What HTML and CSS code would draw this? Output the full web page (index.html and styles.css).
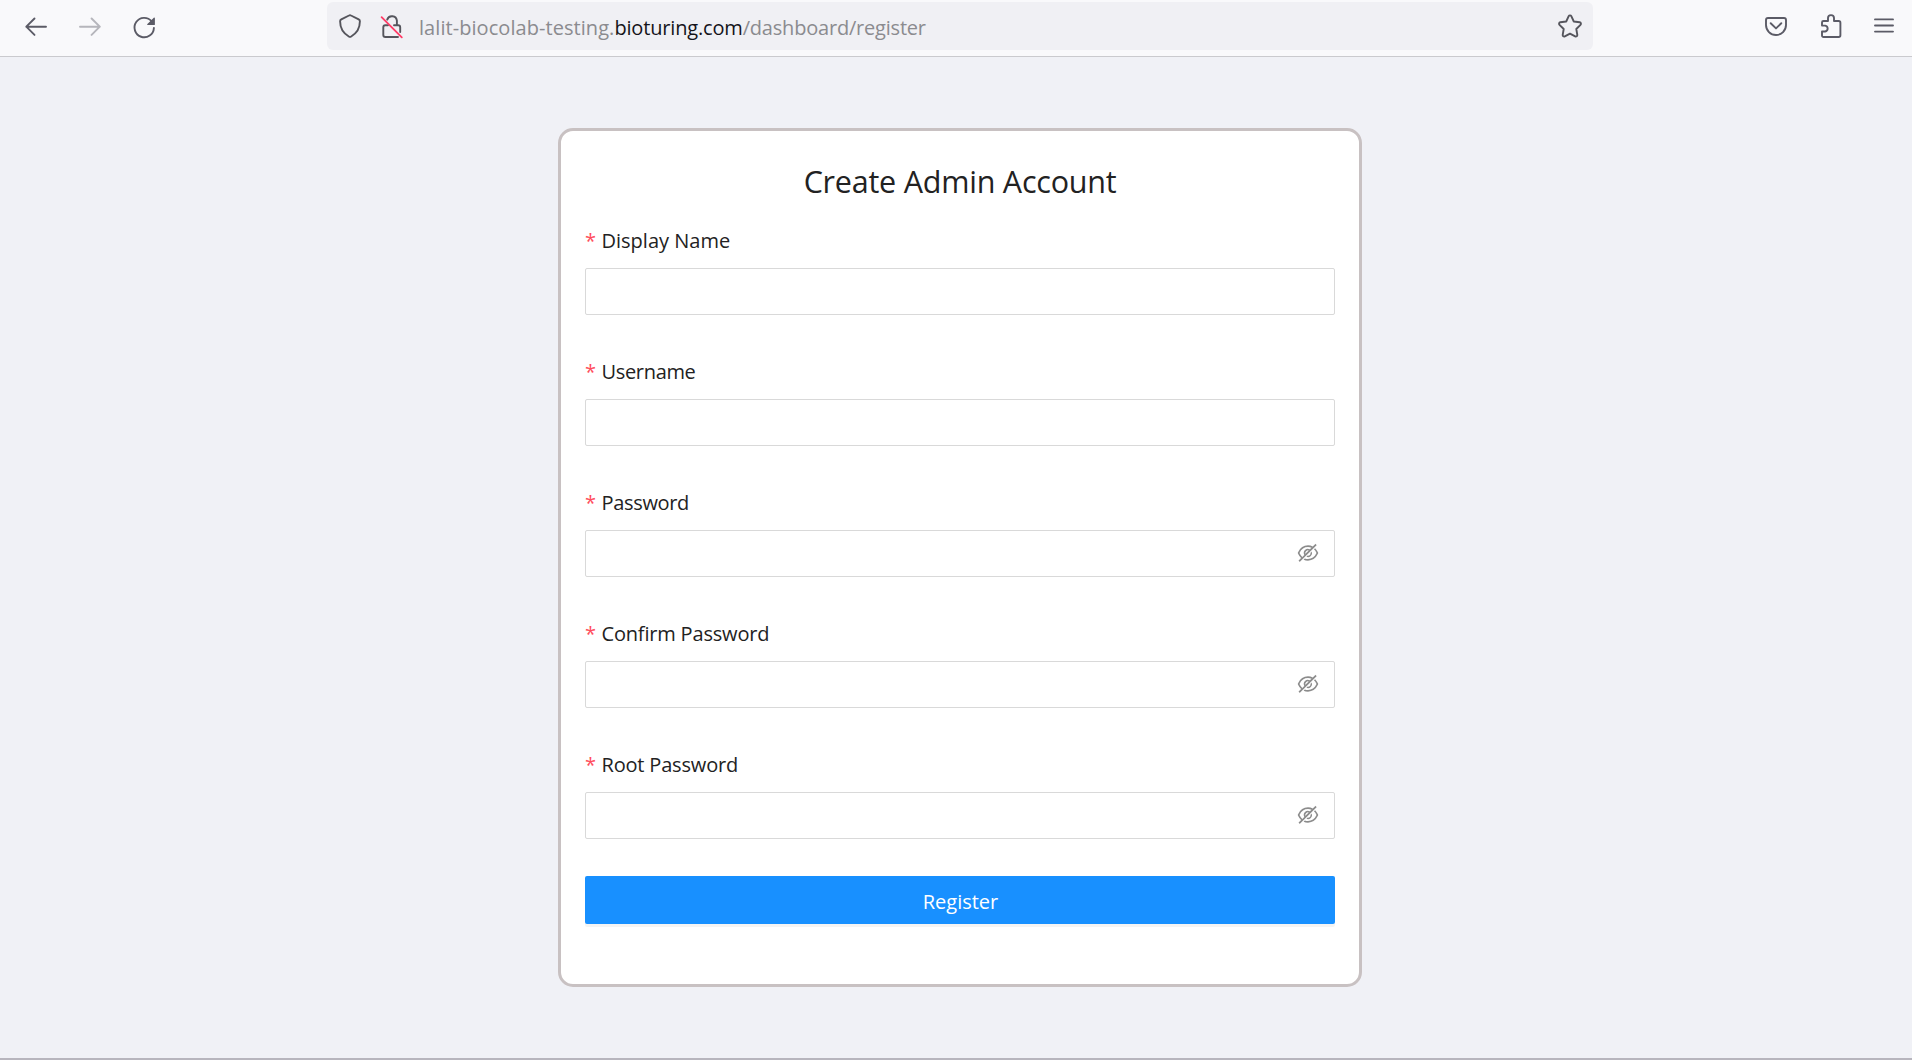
FILE: index.html
```
<!DOCTYPE html>
<html lang="en">
<head>
<meta charset="utf-8">
<title>Create Admin Account</title>
<link rel="stylesheet" href="styles.css">
</head>
<body>
<svg class="defs" aria-hidden="true">
  <symbol id="eye-off" viewBox="0 0 1024 1024">
    <path d="M942.2 486.2Q889.47 375.11 816.7 305l-50.88 50.88C807.31 395.53 843.45 447.4 874.7 512 791.5 684.2 673.4 766 512 766q-72.67 0-133.87-22.38L323 798.75Q408 838 512 838q288.3 0 430.2-300.3a60.29 60.29 0 000-51.5zm-63.57-320.64L836 122.88a8 8 0 00-11.32 0L715.31 232.2Q624.86 186 512 186q-288.3 0-430.2 300.3a60.3 60.3 0 000 51.5q56.69 119.4 136.5 191.41L112.48 835a8 8 0 000 11.31L155.17 889a8 8 0 0011.31 0l712.15-712.12a8 8 0 000-11.32zM149.3 512C232.6 339.8 350.7 258 512 258c54.54 0 104.13 9.36 149.12 28.39l-70.3 70.3a176 176 0 00-238.13 238.13l-83.42 83.42C223.1 637.49 183.3 582.28 149.3 512zm246.7 0a112.11 112.11 0 01146.2-106.69L401.31 546.2A112 112 0 01396 512z"/>
    <path d="M508 624c-3.46 0-6.87-.16-10.25-.47l-52.82 52.82a176.09 176.09 0 00227.42-227.42l-52.82 52.82c.31 3.38.47 6.79.47 10.25a111.94 111.94 0 01-112 112z"/>
  </symbol>
</svg>

<header class="toolbar">
  <nav class="nav-buttons">
    <svg class="icon" viewBox="0 0 28 28"><path d="M24 14.7H4.300M12.500 6.500l-8.200 8.200 8.200 8.200"/></svg>
    <svg class="icon icon-disabled" viewBox="0 0 28 28"><path d="M4 14.7h19.8M15.600 6.500l8.200 8.200-8.200 8.200"/></svg>
    <svg class="icon" viewBox="0 0 28 28"><path d="M21.7 9.4A9.7 9.7 0 1 0 23.9 16"/><path class="solid" d="M24.9 6.3v6.1c0 .4-.3.7-.7.7h-6.4c-.6 0-.8-.7-.4-1.1l6.4-6.2c.4-.4 1.1-.1 1.1.5z"/></svg>
  </nav>
  <div class="url-bar">
    <svg class="icon" viewBox="0 0 28 28"><path d="M14 3.2c.4 0 .7.1 1 .3l7.7 3.9c.8.4 1.2 1 1.2 1.9 0 5.9-2.4 11.5-8.7 15.2-.8.5-1.6.5-2.4 0C6.500 20.800 4.100 15.200 4.100 9.300c0-.9.400-1.500 1.200-1.900L13 3.500c.3-.2.6-.3 1-.3z"/></svg>
    <svg class="icon icon-lock" viewBox="0 0 28 28"><path d="M9.200 7.600A5 5 0 0 1 18.900 8.700V13M16 13.200h4.200a2 2 0 0 1 2 2V20M20 25H7.300a2 2 0 0 1-2-2v-7.800a2 2 0 0 1 2-2H10"/><path class="slash" d="M3.600 5.200l20.200 20.200"/></svg>
    <div class="url"><span class="host-prefix">lalit-biocolab-testing.</span><span class="domain">bioturing.com</span><span class="path">/dashboard/register</span></div>
    <svg class="icon icon-star" viewBox="0 0 28 28"><path d="M12.700 4.200c.5-1.100 2.100-1.100 2.600 0l2.500 5.300 5.900.8c1.200.2 1.700 1.600.8 2.500l-4.200 4.200 1 5.900c.2 1.200-1 2.100-2.100 1.500L14 21.600l-5.200 2.800c-1.100.6-2.300-.3-2.100-1.500l1-5.900-4.200-4.200c-.9-.9-.4-2.300.8-2.500l5.900-.8z"/></svg>
  </div>
  <div class="tools">
    <svg class="icon" viewBox="0 0 28 28"><path d="M6 6h16a2 2 0 0 1 2 2v5a10 10 0 0 1-20 0V8a2 2 0 0 1 2-2zM8.700 11.200l5.300 5.200 5.300-5.200"/></svg>
    <svg class="icon" viewBox="0 0 28 28"><path d="M5 13.600V10.500a1.500 1.500 0 0 1 1.500-1.500H11V6.100a3 3 0 0 1 6 0V9h4.700a1.700 1.700 0 0 1 1.700 1.700v12.600a1.700 1.700 0 0 1-1.700 1.700H6.500a1.500 1.500 0 0 1-1.500-1.500v-4h3.200a3 3 0 0 0 0-5.900z"/></svg>
    <svg class="icon icon-menu" viewBox="0 0 28 28"><path d="M5 7.400h18M5 13.500h18M5 19.600h18"/></svg>
  </div>
</header>

<main class="page">
  <form class="card">
    <h1 class="title">Create Admin Account</h1>
    <div class="fields">
      <div class="field">
        <label class="label label-wide" for="display-name">Display Name</label>
        <div class="control"><input class="input" id="display-name" type="text"></div>
      </div>
      <div class="field">
        <label class="label label-tight" for="username">Username</label>
        <div class="control"><input class="input" id="username" type="text"></div>
      </div>
      <div class="field">
        <label class="label label-tight" for="password">Password</label>
        <div class="control"><input class="input" id="password" type="password"><svg class="eye"><use href="#eye-off"/></svg></div>
      </div>
      <div class="field">
        <label class="label" for="confirm">Confirm Password</label>
        <div class="control"><input class="input" id="confirm" type="password"><svg class="eye"><use href="#eye-off"/></svg></div>
      </div>
      <div class="field">
        <label class="label" for="root">Root Password</label>
        <div class="control"><input class="input" id="root" type="password"><svg class="eye"><use href="#eye-off"/></svg></div>
      </div>
    </div>
    <button class="submit" type="button">Register</button>
  </form>
</main>
</body>
</html>
```
FILE: styles.css
```
* { box-sizing: border-box; }

body {
  margin: 0;
  height: 1060px;
  display: flex;
  flex-direction: column;
  overflow: hidden;
  background: #f0f1f6;
  border-bottom: 2px solid #b7b5bd;
  font: 20px/32px "Open Sans", "Noto Sans", sans-serif;
  color: #222;
}

.defs { display: none; }

/* Browser toolbar */
.toolbar {
  flex: none;
  height: 57px;
  padding: 2px 14px 6px 22px;
  display: flex;
  align-items: center;
  background: #f9f9fb;
  border-bottom: 1px solid #cacace;
}

.nav-buttons { display: flex; gap: 26px; }

.icon {
  flex: none;
  width: 28px;
  height: 28px;
  fill: none;
  stroke: #5b5b66;
  stroke-width: 1.9;
  stroke-linecap: round;
  stroke-linejoin: round;
}

.icon-disabled { opacity: .42; }
.icon .solid { fill: #5b5b66; stroke: none; }
.icon .slash { stroke: #ff3b66; stroke-width: 1.8; }

.url-bar {
  width: 1266px;
  height: 48px;
  margin-left: 169px;
  padding: 0 9px;
  display: flex;
  align-items: center;
  border-radius: 6px;
  background: #f0f0f4;
}

.icon-lock { margin-left: 14px; }
.url-bar .icon { stroke: #55555c; }
.url-bar .slash { stroke: #ff3b66; }

.url {
  margin-left: 13px;
  padding-top: 4px;
  flex: 1;
  color: #8b8b8f;
  white-space: nowrap;
}

.host-prefix { letter-spacing: .06px; }
.domain { color: #15141a; letter-spacing: -.17px; }
.path { letter-spacing: -.2px; }

.tools { display: flex; gap: 27px; margin-left: auto; }
.icon-menu { margin-left: -2px; }

/* Registration form */
.page {
  flex: 1;
  padding: 71px 0 0 8px;
  display: flex;
  justify-content: center;
  align-items: flex-start;
}

.card {
  width: 804px;
  height: 859px;
  padding: 29px 24px 0;
  border: 3px solid #c8c1c2;
  border-radius: 15px;
  background: #fff;
}

.title {
  margin: 0 0 23px;
  font-size: 30.5px;
  line-height: 42px;
  font-weight: 400;
  text-align: center;
  letter-spacing: -.23px;
}

.fields { display: grid; gap: 41px; }
.field { display: grid; gap: 11px; }

.label {
  display: flex;
  letter-spacing: -.18px;
}
.label-wide { letter-spacing: 0; }
.label-tight { letter-spacing: -.33px; }

.label::before {
  content: "*";
  width: 16.5px;
  color: #ff4d5c;
}

.control {
  height: 47px;
  padding: 0 14px 1px;
  display: flex;
  align-items: center;
  border: 1px solid #d9d9d9;
  border-radius: 2px;
}

.input {
  flex: 1;
  min-width: 0;
  padding: 0;
  border: 0;
  outline: 0;
  background: none;
  font: inherit;
}

.eye { width: 24px; height: 24px; fill: #8c8c8c; }

.submit {
  display: block;
  width: 100%;
  height: 48px;
  margin-top: 37px;
  padding: 4px 0 0 1px;
  border: 0;
  border-radius: 2px;
  background: #1890ff;
  box-shadow: 0 3px 0 rgba(0, 0, 0, .045);
  color: #fff;
  font: inherit;
}
```
